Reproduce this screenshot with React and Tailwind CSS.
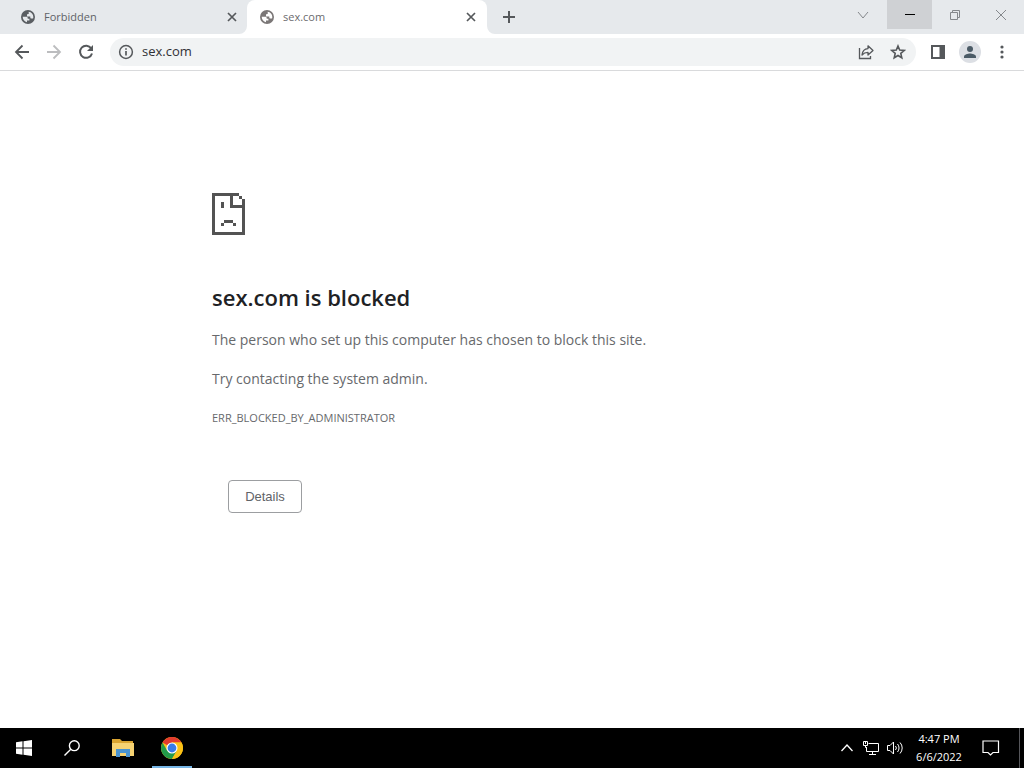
import React from 'react';

const GlobeIcon = ({ className }) => (
  <svg viewBox="0 0 16 16" className={`w-4 h-4 shrink-0 ${className}`} fill="currentColor">
    <path
      fillRule="evenodd"
      d="M8 1a7 7 0 1 0 0 14A7 7 0 0 0 8 1zM2.700 7.800h3.600c.900 0 1.400.600 1.400 1.300v.700h1.700v1.700H7v1.800c-2.500-.500-4.300-2.800-4.300-5.500zM8.700 2.700c2.600.300 4.600 2.500 4.600 5.200 0 .600-.100 1.200-.300 1.700h-1.500c-.800 0-1.200-.600-1.200-1.200V7.500H7V6.200c0-.600.500-1.100 1.100-1.100h.600z"
    />
  </svg>
);

const CloseIcon = () => (
  <svg viewBox="0 0 10 10" className="w-[10px] h-[10px]" fill="none" stroke="currentColor" strokeWidth="1.700">
    <path d="M1 1l8 8M9 1L1 9" />
  </svg>
);

const Tab = ({ title, active }) => (
  <div
    className={
      active
        ? 'relative flex items-center w-[240px] h-full pl-3 pr-[10px] rounded-t-lg bg-white text-[#6b6b6e]'
        : 'flex items-center w-[247px] h-full pl-5 pr-[9px] text-[#5f6368]'
    }
  >
    {active && (
      <>
        <svg viewBox="0 0 8 8" className="absolute bottom-0 -left-2 w-2 h-2" fill="#fff">
          <path d="M8 0v8H0a8 8 0 0 0 8-8z" />
        </svg>
        <svg viewBox="0 0 8 8" className="absolute bottom-0 -right-2 w-2 h-2" fill="#fff">
          <path d="M0 0v8h8a8 8 0 0 1-8-8z" />
        </svg>
      </>
    )}
    <GlobeIcon className={active ? 'text-[#7b7777]' : 'text-[#5a5e62]'} />
    <span className="flex-1 ml-2 text-[11px]">{title}</span>
    <button aria-label={`Close ${title}`} className="p-[1px] text-[#55585b]">
      <CloseIcon />
    </button>
  </div>
);

const TabStrip = () => (
  <div className="flex h-[34px] bg-[#e6e9ec]">
    <Tab title="Forbidden" />
    <Tab title="sex.com" active />
    <button aria-label="New tab" className="w-7 ml-2 flex items-center justify-center text-[#55585b]">
      <svg viewBox="0 0 12 12" className="w-3 h-3" stroke="currentColor" strokeWidth="2">
        <path d="M6 0v12M0 6h12" />
      </svg>
    </button>
    <div className="flex ml-auto h-[29px] text-[#85888c]">
      <button aria-label="Search tabs" className="w-12 flex items-center justify-center">
        <svg viewBox="0 0 12 12" className="w-3 h-3" fill="none" stroke="currentColor">
          <path d="M1 3l5 6 5-6" />
        </svg>
      </button>
      <button aria-label="Minimize" className="w-[45px] flex items-center justify-center bg-[#cfd1d4] text-black">
        <svg viewBox="0 0 10 10" className="w-[10px] h-[10px]" stroke="currentColor">
          <path d="M0 4.500h10" />
        </svg>
      </button>
      <button aria-label="Restore" className="w-[46px] flex items-center justify-center">
        <svg viewBox="0 0 10 10" className="w-[10px] h-[10px]" fill="none" stroke="currentColor">
          <path d="M.5 2.500h7v7h-7zM2.500 2.500v-2h7v7h-2" />
        </svg>
      </button>
      <button aria-label="Close window" className="w-[46px] flex items-center justify-center">
        <svg viewBox="0 0 10 10" className="w-[10px] h-[10px]" fill="none" stroke="currentColor">
          <path d="M0 0l10 10M10 0L0 10" />
        </svg>
      </button>
    </div>
  </div>
);

const Toolbar = () => (
  <div className="flex items-center h-[37px] pl-[6px] pr-[14px] border-b border-[#d9dadc] text-[#55585b]">
    <button aria-label="Back" className="w-8 flex justify-center">
      <svg viewBox="0 0 16 16" className="w-4 h-4" fill="none" stroke="currentColor" strokeWidth="1.800">
        <path d="M15 8H2.500M8.500 1.500L2 8l6.500 6.500" />
      </svg>
    </button>
    <button aria-label="Forward" className="w-8 flex justify-center text-[#bcbdbf]">
      <svg viewBox="0 0 16 16" className="w-4 h-4" fill="none" stroke="currentColor" strokeWidth="1.800">
        <path d="M1 8h12.500M7.500 1.500L14 8l-6.500 6.500" />
      </svg>
    </button>
    <button aria-label="Reload" className="w-8 flex justify-center">
      <svg viewBox="0 0 16 16" className="w-4 h-4" fill="none" stroke="currentColor" strokeWidth="2">
        <path d="M13.200 4.300A6.100 6.100 0 1 0 14 9.500" />
        <path d="M15 1v6H9z" fill="currentColor" stroke="none" />
      </svg>
    </button>
    <div className="flex items-center flex-1 h-7 ml-2 pl-2 pr-[10px] rounded-full bg-[#f1f3f4]">
      <button aria-label="View site information">
        <svg viewBox="0 0 16 16" className="w-4 h-4" fill="none" stroke="currentColor" strokeWidth="1.500">
          <circle cx="8" cy="8" r="6.400" />
          <path d="M8 7v4.500M8 4.200v1.600" strokeWidth="1.700" />
        </svg>
      </button>
      <input
        type="text"
        aria-label="Address and search bar"
        defaultValue="sex.com"
        className="flex-1 min-w-0 ml-2 text-[13px] text-[#303134] bg-transparent outline-none"
      />
      <button aria-label="Share this page" className="mr-4">
        <svg viewBox="0 0 16 16" className="w-4 h-4" fill="none" stroke="currentColor" strokeWidth="1.300">
          <path d="M1.500 4v10.500h11V12" />
          <path d="M4 11c.400-4 2.500-6.200 6-6.400V1.800L15 6.400 10 11V8.300C7.500 8.300 5.500 9.200 4 11z" strokeLinejoin="round" />
        </svg>
      </button>
      <button aria-label="Bookmark this tab">
        <svg viewBox="0 0 16 16" className="w-4 h-4" fill="none" stroke="currentColor" strokeWidth="1.600">
          <path d="M8 2l1.700 4.100 4.500.400-3.400 2.900 1 4.400L8 11.500l-3.800 2.300 1-4.400-3.400-2.900 4.500-.400z" />
        </svg>
      </button>
    </div>
    <button aria-label="Side panel" className="ml-[14px]">
      <svg viewBox="0 0 16 16" className="w-4 h-4" fill="currentColor">
        <path d="M1 1h14v14H1zM3 3v10h6.500V3z" fillRule="evenodd" />
      </svg>
    </button>
    <button aria-label="Profile" className="ml-[13px] w-[22px] h-[22px] rounded-full bg-[#dcdfe4] text-[#4b5b66]">
      <svg viewBox="0 0 22 22" fill="currentColor">
        <circle cx="11" cy="8" r="3" />
        <path d="M5 17v-1.500c0-2 4-3 6-3s6 1 6 3V17z" />
      </svg>
    </button>
    <button aria-label="Menu" className="ml-[13px]">
      <svg viewBox="0 0 16 16" className="w-4 h-4" fill="currentColor">
        <circle cx="8" cy="3" r="1.600" />
        <circle cx="8" cy="8" r="1.600" />
        <circle cx="8" cy="13" r="1.600" />
      </svg>
    </button>
  </div>
);

const SadPage = () => (
  <svg viewBox="0 0 11 14" className="w-[33px] h-[42px]" fill="#535353" shapeRendering="crispEdges">
    <path d="M0 0h9v1H7v3h4v1H6V1H1v12h9V2h1v12H0z" />
    <path d="M9 1h1v1H9zM3 3h1v2H3zM4 9h3v1H4zM3 10h1v1H3zM7 10h1v1H7z" />
  </svg>
);

const ErrorPage = () => (
  <main className="flex-1 bg-white">
    <div className="w-full max-w-[600px] mx-auto pt-[122px] text-[#67696c]">
      <SadPage />
      <h1 className="mt-[46px] text-[22px] leading-8 font-semibold text-[#202124]">sex.com is blocked</h1>
      <p className="mt-[15px] text-sm leading-6">
        The person who set up this computer has chosen to block this site.
      </p>
      <p className="mt-[15px] text-sm leading-6">Try contacting the system admin.</p>
      <p className="mt-[15px] text-[11px] leading-6">ERR_BLOCKED_BY_ADMINISTRATOR</p>
      <button className="mt-[50px] ml-4 w-[74px] h-[33px] border border-[#9c9ea1] rounded font-['Liberation_Sans',Arial,sans-serif] text-[13px] text-[#5f6368]">
        Details
      </button>
    </div>
  </main>
);

const ChromeLogo = () => (
  <svg viewBox="0 0 22 22" className="w-[22px] h-[22px]">
    <circle cx="11" cy="11" r="11" fill="#fbc116" />
    <path d="M11 11L1.500 5.500A11 11 0 0 1 20.500 5.500H11z" fill="#e33b2e" />
    <path d="M1.500 5.500A11 11 0 0 0 11 22l4.800-8.200L11 11l-4.800 2.800z" fill="#229b4a" />
    <path d="M20.500 5.500A11 11 0 0 1 11 22l4.800-8.200L11 5.500z" fill="#fbc116" />
    <circle cx="11" cy="11" r="5.500" fill="#fff" />
    <circle cx="11" cy="11" r="4.400" fill="#397be8" />
  </svg>
);

const Taskbar = () => (
  <footer className="flex h-10 bg-black text-white">
    <button aria-label="Start" className="w-12 flex items-center justify-center">
      <svg viewBox="0 0 16 16" className="w-4 h-4" fill="currentColor">
        <path d="M0 2.200L6.500 1.300v6.200H0zM7.500 1.200L16 0v7.500H7.500zM0 8.500h6.500v6.200L0 13.800zM7.500 8.500H16V16l-8.500-1.200z" />
      </svg>
    </button>
    <button aria-label="Search" className="w-12 flex items-center justify-center">
      <svg viewBox="0 0 16 16" className="w-4 h-4" fill="none" stroke="currentColor" strokeWidth="1.400">
        <circle cx="10.300" cy="5.700" r="4.900" />
        <path d="M6.800 9.200L.500 15.500" />
      </svg>
    </button>
    <button aria-label="File Explorer" className="w-[54px] flex items-center justify-center">
      <svg viewBox="0 0 22 18" className="w-[22px] h-[18px]">
        <path d="M0 0h8l2 2h11v4H0z" fill="#d9a431" />
        <path d="M0 4h22v13H0z" fill="#f6d272" />
        <path d="M4 10h14v8h-4v-4H8v4H4z" fill="#4a93cf" />
      </svg>
    </button>
    <button aria-label="Google Chrome" className="w-10 ml-[2px] pt-[2px] flex items-center justify-center border-b-2 border-[#76b5e5]">
      <ChromeLogo />
    </button>
    <div className="flex items-center ml-auto">
      <button aria-label="Show hidden icons">
        <svg viewBox="0 0 12 12" className="w-3 h-3" fill="none" stroke="currentColor" strokeWidth="1.300">
          <path d="M.5 9L6 3l5.500 6" />
        </svg>
      </button>
      <button aria-label="Network" className="ml-[10px]">
        <svg viewBox="0 0 16 16" className="w-4 h-4" fill="none" stroke="currentColor">
          <path d="M5.500 3.500h10v8h-12V7M9.500 11.500v3M6 14.500h7" />
          <path d="M.5 1.500h4v4h-4zM2.500 2v2M2.500 5.500v2h1" />
        </svg>
      </button>
      <button aria-label="Volume" className="ml-2">
        <svg viewBox="0 0 17 16" className="w-[17px] h-4" fill="none" stroke="currentColor">
          <path d="M.5 5.500h2.500L6.500 2v12L3 10.500H.5z" />
          <path d="M8.500 6a3 3 0 0 1 0 4M10.500 4a6 6 0 0 1 0 8M13 2.500a8 8 0 0 1 0 11" />
        </svg>
      </button>
      <time className="w-[70px] text-center text-[11px] leading-[18px]">
        4:47 PM
        <br />
        6/6/2022
      </time>
      <button aria-label="Notifications" className="ml-2">
        <svg viewBox="0 0 18 16" className="w-[18px] h-4" fill="none" stroke="currentColor" strokeWidth="1.200">
          <path d="M1 1h15.500v11.500H11l-2.500 2.500L6 12.500H1z" />
        </svg>
      </button>
      <button aria-label="Show desktop" className="w-[5px] h-10 ml-[19px] border-l border-[#55565a]" />
    </div>
  </footer>
);

const App = () => {
  return (
    <div className="flex flex-col min-h-screen bg-white font-['Open_Sans','Noto_Sans',sans-serif]">
      <TabStrip />
      <Toolbar />
      <ErrorPage />
      <Taskbar />
    </div>
  );
};

export default App;
